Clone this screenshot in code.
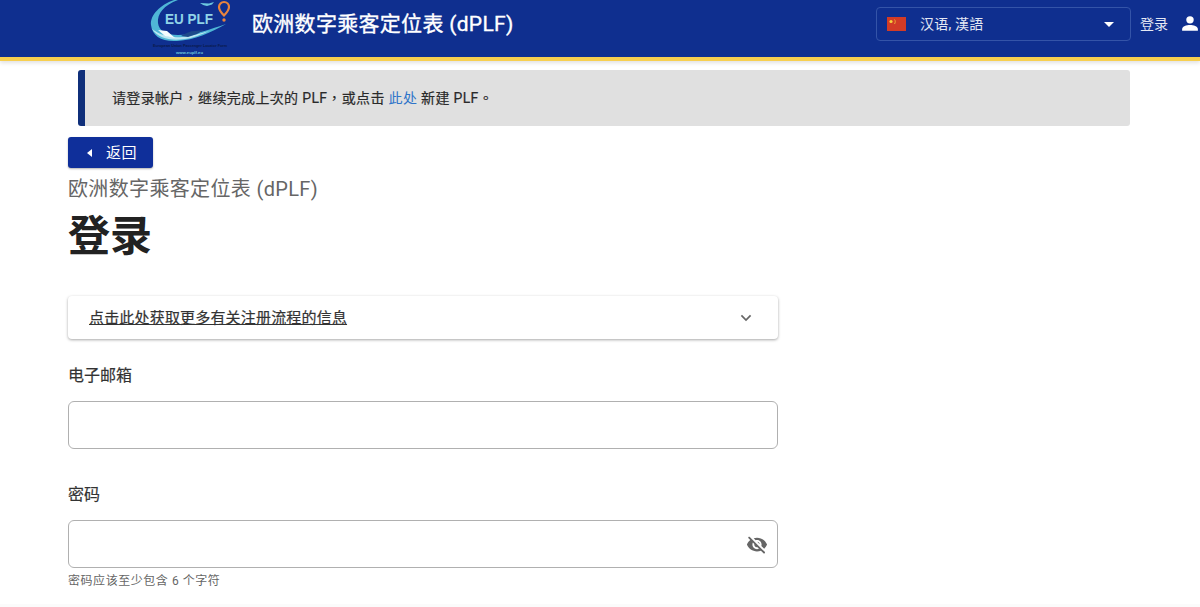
<script>
  // static login page for the dPLF form
</script>

<div class="page">
  <header class="topbar">
    <div class="brand">
      <svg class="logo" viewBox="0 0 80 57" width="80" height="57" aria-hidden="true">
        <path d="M24 0C10 5 0 15 1 25c1 11 11 17 26 16 18-1 33-8 49-17-15 5-31 11-48 11C16 35 9 31 8 23 7 14 14 5 28 0z" fill="#4fb6d6"/>
        <path d="M2 29c7 10 19 12 33 10 9-1 17-5 24-8-8 2-17 5-27 6-12 1-22-2-30-8z" fill="#bde7f2"/>
        <path d="M8 30l9 1 8 7-10-2z" fill="#f4fbfd"/>
        <path d="M31 36c5-3 9-5 14-5l9-1-7 4-9 3z" fill="#1d4a8a"/>
        <path d="M50 3l9 .5 5-1.500-2 2.500-5 1.500c-3-.5-5-1.500-7-3z" fill="#6cc8df"/>
        <path d="M74 2a5 5 0 0 1 5 5c0 3.500-5 8.500-5 8.500S69 10.500 69 7a5 5 0 0 1 5-5z" fill="none" stroke="#e8843e" stroke-width="2.200"/>
        <circle cx="74" cy="20" r="1.700" fill="#e8843e"/>
        <text x="15" y="24" class="logo-name" textLength="48" lengthAdjust="spacingAndGlyphs">EU PLF</text>
        <text x="3" y="46.500" class="logo-small" textLength="74" lengthAdjust="spacingAndGlyphs">European Union Passenger Locator Form</text>
        <text x="26" y="54" class="logo-url" textLength="27" lengthAdjust="spacingAndGlyphs">www.euplf.eu</text>
      </svg>
      <span class="app-name">欧洲数字乘客定位表 (dPLF)</span>
    </div>
    <div class="actions">
      <div class="lang">
        <svg class="flag" viewBox="0 0 19 14" width="19" height="14" aria-hidden="true">
          <rect width="19" height="14" fill="#d23b26"/>
          <circle cx="4" cy="4.500" r="1.600" fill="#f5d33c"/>
          <path d="M7.500 2.500c1 1 1 3 0 4.500" fill="none" stroke="#f5d33c" stroke-width=".7"/>
        </svg>
        <span class="lang-label">汉语, 漢語</span>
        <svg class="caret" viewBox="0 0 10 5" width="10" height="5" aria-hidden="true"><path d="M0 0h10L5 5z" fill="#fff"/></svg>
      </div>
      <span class="login-link">登录</span>
      <svg class="person" viewBox="0 0 16 16" width="18" height="18" aria-hidden="true">
        <circle cx="8" cy="4.300" r="3.300" fill="#fff"/>
        <path d="M1 14v-1.500C1 10 5 8.800 8 8.800s7 1.200 7 3.700V14z" fill="#fff"/>
      </svg>
    </div>
  </header>

  <main class="content">
    <div class="notice">
      <p>请登录帐户，继续完成上次的 PLF，或点击 <a href="#here">此处</a> 新建 PLF。</p>
    </div>

    <button class="back" type="button">
      <svg viewBox="0 0 5 8" width="5" height="8" aria-hidden="true"><path d="M5 0v8L0 4z" fill="#fff"/></svg>
      <span>返回</span>
    </button>

    <div class="subtitle">欧洲数字乘客定位表 (dPLF)</div>
    <h1>登录</h1>

    <form class="form">
      <div class="accordion">
        <span>点击此处获取更多有关注册流程的信息</span>
        <svg viewBox="0 0 12 8" width="12" height="8" aria-hidden="true"><path d="M1.400 1.400L6 6l4.600-4.600" fill="none" stroke="#666" stroke-width="1.700"/></svg>
      </div>

      <label class="field-label" for="email">电子邮箱</label>
      <div class="input-box"><input id="email" type="email" /></div>

      <label class="field-label second" for="pw">密码</label>
      <div class="input-box pw">
        <input id="pw" type="password" />
        <svg class="eye" viewBox="0 0 24 24" width="22" height="22" aria-hidden="true">
          <path fill="#666" d="M12 6.500c2.760 0 5 2.240 5 5 0 .51-.1 1-.24 1.460l3.060 3.060c1.390-1.230 2.490-2.770 3.180-4.530C21.270 7.110 17 4 12 4c-1.270 0-2.490.2-3.640.57l2.170 2.170c.47-.14.960-.24 1.470-.24zM2.710 3.160c-.39.39-.39 1.020 0 1.410l1.970 1.970C3.060 7.830 1.770 9.530 1 11.500 2.730 15.890 7 19 12 19c1.520 0 2.970-.3 4.310-.82l2.720 2.720c.39.39 1.020.39 1.410 0 .39-.39.39-1.020 0-1.410L4.130 3.160c-.39-.39-1.030-.39-1.420 0zM12 16.500c-2.760 0-5-2.240-5-5 0-.77.18-1.500.49-2.140l1.570 1.570c-.03.18-.06.37-.06.57 0 1.660 1.340 3 3 3 .2 0 .38-.03.57-.07L14.140 16c-.65.32-1.370.5-2.140.5zm2.970-5.330c-.15-1.400-1.250-2.490-2.640-2.640l2.640 2.640z"/>
        </svg>
      </div>
      <div class="hint">密码应该至少包含 6 个字符</div>
    </form>
  </main>
  <div class="footer-edge"></div>
</div>

<style>
  :global(body) {
    margin: 0;
    background: #fff;
  }

  .page {
    height: 607px;
    overflow: hidden;
    font-family: "Roboto", "Noto Sans CJK SC", sans-serif;
    color: #222;
  }

  .topbar {
    height: 57px;
    background: #0f2f8f;
    border-bottom: 4px solid #f7cf4f;
    box-shadow: 0 2px 4px rgba(0, 0, 0, 0.12);
    display: flex;
    align-items: flex-start;
    justify-content: space-between;
    padding: 0 0 0 150px;
  }

  .brand {
    display: flex;
    align-items: flex-start;
    gap: 22px;
    height: 57px;
  }

  .logo {
    display: block;
    flex: none;
  }

  .logo-name {
    font: 700 15px "Liberation Sans", sans-serif;
    fill: #8fd4e8;
  }

  .logo-small {
    font: 700 3.700px "Liberation Sans", sans-serif;
    fill: #0b1a4a;
  }

  .logo-url {
    font: 700 4.400px "Liberation Sans", sans-serif;
    fill: #6cc8df;
  }

  .app-name {
    color: #fff;
    font-size: 21px;
    line-height: 49px;
    font-weight: 400;
    -webkit-text-stroke: 0.35px #fff;
    letter-spacing: 0.3px;
    white-space: nowrap;
  }

  .actions {
    display: flex;
    align-items: center;
    height: 34px;
    margin-top: 7px;
  }

  .lang {
    width: 255px;
    height: 34px;
    box-sizing: border-box;
    border: 1px solid #3454a8;
    border-radius: 4px;
    display: flex;
    align-items: center;
    padding: 0 16px 0 10px;
  }

  .flag {
    flex: none;
  }

  .lang-label {
    margin-left: 14px;
    padding-bottom: 3px;
    color: #e4e8f4;
    font-size: 14px;
    letter-spacing: 0.2px;
    flex: 1;
  }

  .caret {
    flex: none;
  }

  .login-link {
    margin-left: 9px;
    padding-bottom: 3px;
    color: #e4e8f4;
    font-size: 14px;
  }

  .person {
    margin-left: 13px;
    margin-right: 1px;
  }

  .content {
    padding: 9px 0 0 68px;
  }

  .notice {
    width: 1052px;
    height: 56px;
    margin-left: 10px;
    box-sizing: border-box;
    background: #e0e0e0;
    border-left: 7px solid #0f2f7a;
    border-radius: 3px;
    padding-left: 27px;
    display: flex;
    align-items: center;
  }

  .notice p {
    margin: 0 0 3px;
    font-family: "Roboto", "Noto Sans CJK TC", sans-serif;
    font-size: 14px;
    font-weight: 400;
    -webkit-text-stroke: 0.2px #2a2a2a;
    letter-spacing: 0.34px;
    color: #2a2a2a;
  }

  .notice a {
    color: #2e74c9;
    -webkit-text-stroke: 0;
    text-decoration: none;
  }

  .back {
    margin-top: 11px;
    width: 85px;
    height: 31px;
    border: 0;
    border-radius: 3px;
    background: #0f2f9a;
    box-shadow: 0 1px 2px rgba(0, 0, 0, 0.3);
    color: #fff;
    font: inherit;
    font-size: 15px;
    letter-spacing: 0.5px;
    display: flex;
    align-items: center;
    gap: 14px;
    padding: 0 0 0 19px;
  }

  .back span {
    padding-bottom: 3px;
  }

  .subtitle {
    margin-top: 8px;
    font-size: 20px;
    line-height: 26px;
    letter-spacing: 0.35px;
    color: #666;
  }

  h1 {
    margin: 7px 0 0;
    font-size: 42px;
    line-height: 56px;
    font-weight: 700;
    color: #222;
  }

  .form {
    width: 710px;
    margin-top: 31px;
  }

  .accordion {
    height: 43px;
    box-sizing: border-box;
    background: #fff;
    border-radius: 4px;
    box-shadow: 0 1px 3px rgba(0, 0, 0, 0.35);
    display: flex;
    align-items: center;
    justify-content: space-between;
    padding: 0 26px 0 21px;
  }

  .accordion span {
    padding-bottom: 2px;
    font-size: 15px;
    font-weight: 400;
    -webkit-text-stroke: 0.2px #333;
    letter-spacing: 0.18px;
    text-decoration: underline;
    color: #333;
  }

  .field-label {
    display: block;
    margin-top: 26px;
    font-size: 16px;
    line-height: 22px;
    font-weight: 400;
    -webkit-text-stroke: 0.2px #333;
    color: #333;
  }

  .field-label.second {
    margin-top: 35px;
  }

  .input-box {
    position: relative;
    margin-top: 14px;
    height: 48px;
    box-sizing: border-box;
    border: 1px solid #b0b0b0;
    border-radius: 6px;
    background: #fff;
  }

  .input-box input {
    width: 100%;
    height: 100%;
    box-sizing: border-box;
    border: 0;
    outline: 0;
    background: transparent;
  }

  .eye {
    position: absolute;
    right: 9px;
    top: 13px;
  }

  .hint {
    margin-top: 5px;
    font-size: 12px;
    line-height: 16px;
    letter-spacing: 0.55px;
    color: #666;
  }

  .footer-edge {
    margin-top: 15px;
    height: 10px;
    background: #fbfbfb;
  }
</style>
